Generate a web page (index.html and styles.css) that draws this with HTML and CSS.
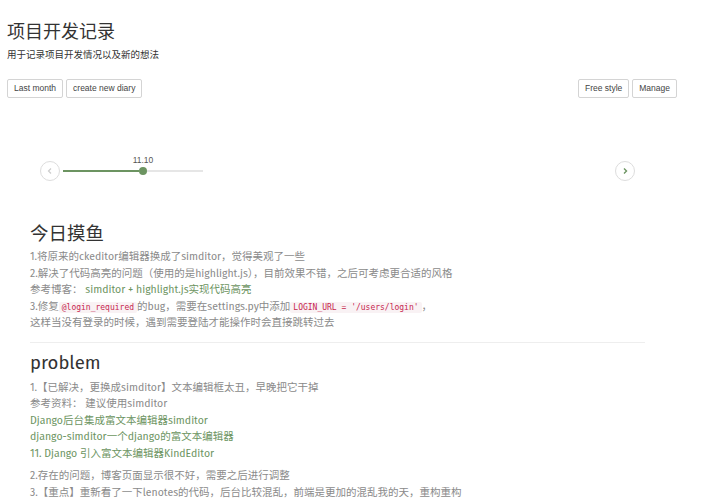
FILE: index.html
```html
<!DOCTYPE html>
<html>
<head>
<meta charset="utf-8">
<link rel="stylesheet" href="styles.css">
</head>
<body>
<header class="header">
  <h1 class="title">项目开发记录</h1>
  <p class="subtitle">用于记录项目开发情况以及新的想法</p>
  <div class="toolbar">
    <div class="btn-group">
      <button class="btn">Last month</button>
      <button class="btn">create new diary</button>
    </div>
    <div class="btn-group">
      <button class="btn">Free style</button>
      <button class="btn">Manage</button>
    </div>
  </div>
</header>

<div class="timeline">
  <button class="circle circle-left">
    <svg width="8" height="8" viewBox="0 0 8 8"><path d="M5 1.5 L2.5 4 L5 6.5" fill="none" stroke="#ccc" stroke-width="1.2"/></svg>
  </button>
  <div class="track">
    <div class="track-fill"></div>
    <div class="dot"><span class="dot-label">11.10</span></div>
    <div class="track-rest"></div>
  </div>
  <div class="spacer"></div>
  <button class="circle circle-right">
    <svg width="8" height="8" viewBox="0 0 8 8"><path d="M3 1.5 L5.5 4 L3 6.5" fill="none" stroke="#6c9461" stroke-width="1.4"/></svg>
  </button>
</div>

<main class="content">
  <section class="entry">
    <h2 class="entry-title">今日摸鱼</h2>
    <p class="line">1.将原来的ckeditor编辑器换成了simditor，觉得美观了一些</p>
    <p class="line">2.解决了代码高亮的问题（使用的是highlight.js），目前效果不错，之后可考虑更合适的风格</p>
    <p class="line">参考博客： <a class="link">simditor + highlight.js实现代码高亮</a></p>
    <p class="line">3.修复<code class="code">@login_required</code>的bug，需要在settings.py中添加<code class="code">LOGIN_URL = '/users/login'</code>，</p>
    <p class="line">这样当没有登录的时候，遇到需要登陆才能操作时会直接跳转过去</p>
  </section>
  <hr class="divider">
  <section class="entry">
    <h2 class="entry-title entry-title-loose">problem</h2>
    <p class="line">1.【已解决，更换成simditor】文本编辑框太丑，早晚把它干掉</p>
    <p class="line">参考资料： 建议使用simditor</p>
    <p class="line"><a class="link">Django后台集成富文本编辑器simditor</a></p>
    <p class="line"><a class="link">django-simditor一个django的富文本编辑器</a></p>
    <p class="line"><a class="link">11. Django 引入富文本编辑器KindEditor</a></p>
    <p class="line gap">2.存在的问题，博客页面显示很不好，需要之后进行调整</p>
    <p class="line">3.【重点】重新看了一下lenotes的代码，后台比较混乱，前端是更加的混乱我的天，重构重构</p>
  </section>
</main>
</body>
</html>
```

FILE: styles.css
```css
html, body {
  margin: 0;
  padding: 0;
  background: #fff;
}
body {
  font-family: "Fira Sans", "Noto Sans", "Noto Sans CJK SC", sans-serif;
  color: #333;
}
.header {
  padding: 20px 34px 0 7px;
}
.title {
  margin: 0;
  font-family: "Liberation Sans", "Noto Sans CJK SC", sans-serif;
  font-weight: normal;
  font-size: 18px;
  line-height: 24px;
  color: #333;
}
.subtitle {
  margin: 4px 0 0;
  font-family: "Liberation Sans", "Noto Sans CJK SC", sans-serif;
  font-size: 9.5px;
  line-height: 14px;
  color: #333;
}
.toolbar {
  margin-top: 17px;
  display: flex;
  justify-content: space-between;
}
.btn-group {
  display: flex;
  gap: 3px;
}
.btn {
  height: 19px;
  padding: 0 6px;
  border: 1px solid #d4d4d4;
  border-radius: 2px;
  background: #fff;
  font-family: "Liberation Sans", sans-serif;
  font-size: 8.5px;
  color: #444;
  line-height: 17px;
}
.timeline {
  margin-top: 63px;
  padding: 0 76px 0 40px;
  display: flex;
  align-items: center;
  height: 20px;
}
.circle {
  width: 20px;
  height: 20px;
  border-radius: 50%;
  border: 1px solid #ddd;
  background: #fff;
  padding: 0;
  display: flex;
  align-items: center;
  justify-content: center;
  flex: none;
}
.track {
  margin-left: 3px;
  display: flex;
  align-items: center;
  width: 140px;
}
.track-fill {
  width: 76px;
  height: 2px;
  background: #6c9461;
}
.dot {
  position: relative;
  width: 8px;
  height: 8px;
  border-radius: 50%;
  background: #6c9461;
  flex: none;
}
.dot-label {
  position: absolute;
  left: 50%;
  bottom: 10px;
  transform: translateX(-50%);
  font-family: "Liberation Sans", sans-serif;
  font-size: 8.5px;
  color: #555;
  white-space: nowrap;
}
.track-rest {
  flex: 1;
  height: 2px;
  background: #e6e6e6;
}
.spacer {
  flex: 1;
}
.content {
  width: 615px;
  margin: 41px 0 0 30px;
}
.entry-title {
  margin: 0 0 3px;
  font-weight: normal;
  font-size: 18.5px;
  line-height: 24px;
  color: #333;
}
.entry-title-loose {
  margin-bottom: 5px;
}
.line {
  margin: 0;
  font-size: 10.5px;
  line-height: 16.5px;
  height: 16.5px;
  color: #8a8a8a;
}
.line.gap {
  margin-top: 6px;
}
.link {
  color: #6c9461;
  text-decoration: none;
}
.code {
  font-family: "DejaVu Sans Mono", monospace;
  font-size: 8px;
  line-height: 10px;
  color: #c7254e;
  background: #f9f2f4;
  padding: 1px 3px;
  border-radius: 2px;
}
.divider {
  border: 0;
  border-top: 1px solid #eee;
  margin: 10px 0 8px;
}
```
